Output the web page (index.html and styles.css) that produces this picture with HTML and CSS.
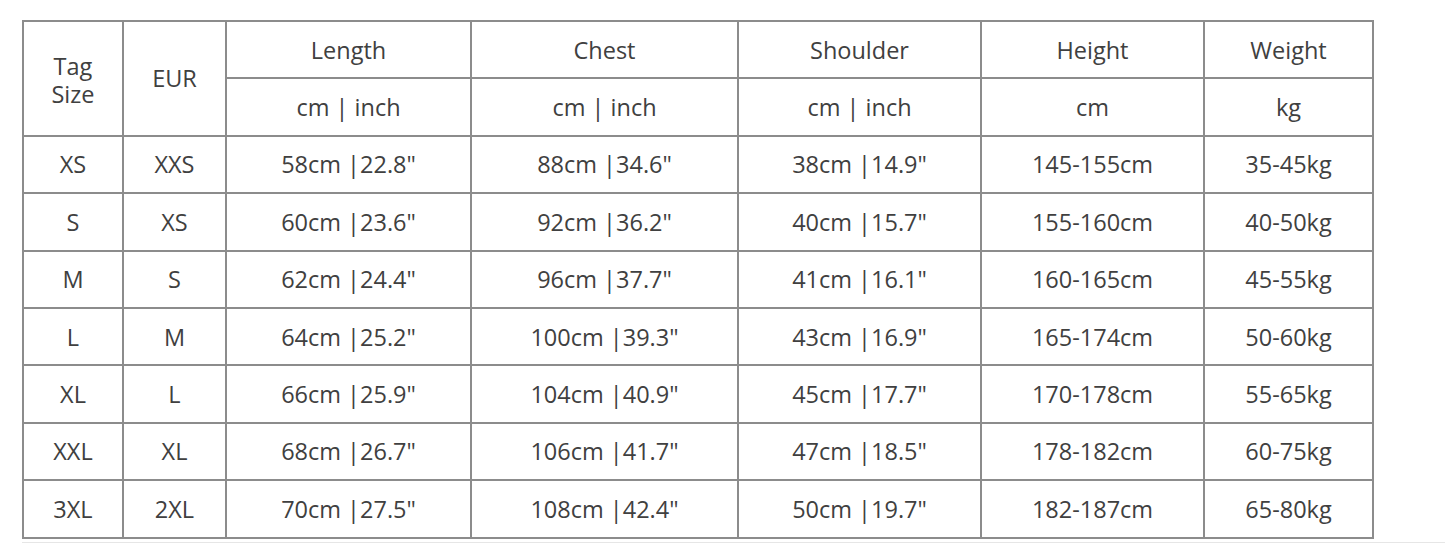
FILE: index.html
```html
<!DOCTYPE html>
<html>
<head>
<meta charset="utf-8">
<link rel="stylesheet" href="styles.css">
</head>
<body>
<div class="wrap">
<table class="size-table">
  <colgroup>
    <col class="c-tag"><col class="c-eur"><col class="c-len"><col class="c-chest"><col class="c-sh"><col class="c-h"><col class="c-w">
  </colgroup>
  <thead>
    <tr>
      <th rowspan="2" class="tag"><span class="ln">Tag</span><span class="ln">Size</span></th>
      <th rowspan="2">EUR</th>
      <th>Length</th>
      <th>Chest</th>
      <th>Shoulder</th>
      <th>Height</th>
      <th>Weight</th>
    </tr>
    <tr>
      <th>cm | inch</th>
      <th>cm | inch</th>
      <th>cm | inch</th>
      <th>cm</th>
      <th>kg</th>
    </tr>
  </thead>
  <tbody>
    <tr><td>XS</td><td>XXS</td><td>58cm |22.8"</td><td>88cm |34.6"</td><td>38cm |14.9"</td><td>145-155cm</td><td>35-45kg</td></tr>
    <tr><td>S</td><td>XS</td><td>60cm |23.6"</td><td>92cm |36.2"</td><td>40cm |15.7"</td><td>155-160cm</td><td>40-50kg</td></tr>
    <tr><td>M</td><td>S</td><td>62cm |24.4"</td><td>96cm |37.7"</td><td>41cm |16.1"</td><td>160-165cm</td><td>45-55kg</td></tr>
    <tr><td>L</td><td>M</td><td>64cm |25.2"</td><td>100cm |39.3"</td><td>43cm |16.9"</td><td>165-174cm</td><td>50-60kg</td></tr>
    <tr><td>XL</td><td>L</td><td>66cm |25.9"</td><td>104cm |40.9"</td><td>45cm |17.7"</td><td>170-178cm</td><td>55-65kg</td></tr>
    <tr><td>XXL</td><td>XL</td><td>68cm |26.7"</td><td>106cm |41.7"</td><td>47cm |18.5"</td><td>178-182cm</td><td>60-75kg</td></tr>
    <tr><td>3XL</td><td>2XL</td><td>70cm |27.5"</td><td>108cm |42.4"</td><td>50cm |19.7"</td><td>182-187cm</td><td>65-80kg</td></tr>
  </tbody>
</table>
<div class="rule"></div>
</div>
</body>
</html>
```
FILE: styles.css
```css
html, body {
  margin: 0;
  padding: 0;
  background: #ffffff;
}
body {
  font-family: "Open Sans", "Liberation Sans", sans-serif;
  color: #404040;
}
.wrap {
  padding: 20px 0 0 22px;
}
.size-table {
  border-collapse: collapse;
  table-layout: fixed;
  width: 1350px;
  border: 2px solid #8c8c8c;
}
.c-tag { width: 100px; }
.c-eur { width: 103px; }
.c-len { width: 245px; }
.c-chest { width: 267px; }
.c-sh { width: 243px; }
.c-h { width: 223px; }
.c-w { width: 169px; }
.size-table th,
.size-table td {
  border: 2px solid #8c8c8c;
  text-align: center;
  vertical-align: middle;
  font-weight: 400;
  font-size: 23.5px;
  line-height: 28px;
  padding: 0;
  white-space: nowrap;
}
.size-table th.tag {
  padding-top: 4px;
}
.ln {
  display: block;
  height: 28px;
  overflow: visible;
}
.size-table tr {
  height: 57.4px;
}
.rule {
  margin-top: 3px;
  height: 1px;
  background: #e6e6e6;
}
```
